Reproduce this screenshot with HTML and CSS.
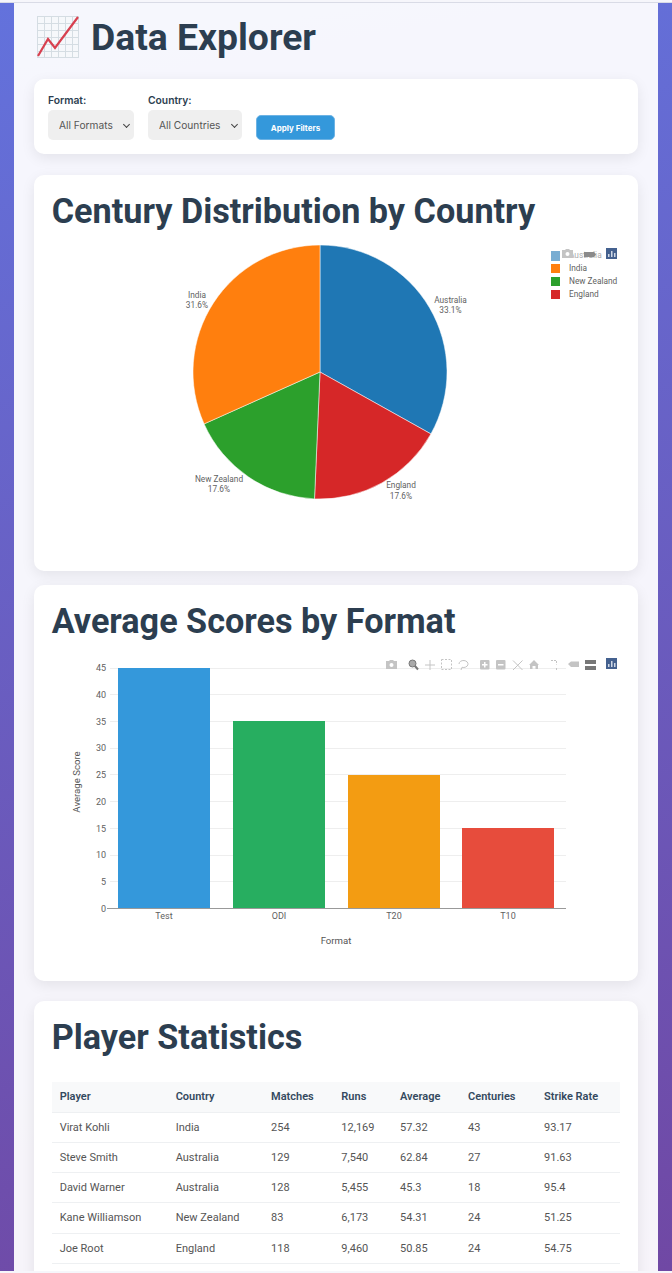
FILE: index.html
```html
<!DOCTYPE html>
<html>
<head>
    <title>Data Explorer</title>
    <link rel="stylesheet" href="styles.css">
</head>
<body>
<div class="container">
    <h1 class="page-title">
        <svg class="title-icon" viewBox="0 0 42 42">
            <rect x="0.5" y="0.5" width="41" height="41" fill="#f6f8fb" stroke="#d5dde3"/>
            <path d="M7.500 1V41M14.500 1V41M21.500 1V41M28.500 1V41M35.500 1V41M1 7.500H41M1 14.500H41M1 21.500H41M1 28.500H41M1 35.500H41" stroke="#d5dde3" stroke-width="1" fill="none"/>
            <path d="M1 40L11 23L18 32L41 1" stroke="#d8404f" stroke-width="2.200" fill="none"/>
        </svg>
        Data Explorer
    </h1>

    <form class="card filters">
        <div class="filter-group">
            <label for="format">Format:</label>
            <div class="select-wrap format-select">
                <select id="format"><option>All Formats</option></select>
            </div>
        </div>
        <div class="filter-group">
            <label for="country">Country:</label>
            <div class="select-wrap country-select">
                <select id="country"><option>All Countries</option></select>
            </div>
        </div>
        <button type="button" class="apply-btn">Apply Filters</button>
    </form>

    <section class="card pie-card">
        <h2>Century Distribution by Country</h2>
        <svg class="chart" width="569" height="320" viewBox="52 240 569 320">
            <!-- pie slices, clockwise from the top -->
            <path d="M320 372V245A127 127 0 0 1 430.9 433.9Z" fill="#1f77b4" stroke="#fff" stroke-width="0.5"/>
            <path d="M320 372L430.9 433.9A127 127 0 0 1 314.5 498.9Z" fill="#d62728" stroke="#fff" stroke-width="0.5"/>
            <path d="M320 372L314.5 498.9A127 127 0 0 1 204.1 423.9Z" fill="#2ca02c" stroke="#fff" stroke-width="0.5"/>
            <path d="M320 372L204.1 423.9A127 127 0 0 1 320 245Z" fill="#ff7f0e" stroke="#fff" stroke-width="0.5"/>

            <g class="pie-label">
                <text x="450.500" y="303">Australia</text><text x="450.500" y="313">33.1%</text>
                <text x="197" y="298">India</text><text x="197" y="308">31.6%</text>
                <text x="219" y="482">New Zealand</text><text x="219" y="492">17.6%</text>
                <text x="401" y="488">England</text><text x="401" y="499">17.6%</text>
            </g>

            <rect x="551" y="251" width="9" height="10" fill="#1f77b4" opacity="0.6"/>
            <rect x="551" y="264" width="9" height="9" fill="#ff7f0e"/>
            <rect x="551" y="277" width="9" height="9" fill="#2ca02c"/>
            <rect x="551" y="290" width="9" height="9" fill="#d62728"/>
            <g class="legend-label">
                <text x="569" y="258" opacity="0.55">Australia</text>
                <text x="569" y="271">India</text>
                <text x="569" y="284">New Zealand</text>
                <text x="569" y="297">England</text>
            </g>

            <!-- modebar -->
            <g fill="#c4c4c4">
                <path d="M562 250h3l1-1h3l1 1h3v8h-11z"/>
                <circle cx="567.500" cy="254" r="2" fill="#fff"/>
                <path d="M584 252h10l2 2.500-2 2.500h-10z" fill="#8a8a8a"/>
            </g>
            <rect x="606" y="248" width="11" height="11" fill="#44618f"/>
            <path d="M608 257v-3h1.500v3zM611 257v-6h1.500v6zM614 257v-4h1.500v4z" fill="#cfd8e6"/>
        </svg>
    </section>

    <section class="card bar-card">
        <h2>Average Scores by Format</h2>
        <svg class="chart" width="569" height="310" viewBox="52 650 569 310">
            <g stroke="#eee" stroke-width="1">
                <path d="M110 668.500H566M110 694.500H566M110 721.500H566M110 748.500H566M110 774.500H566M110 801.500H566M110 828.500H566M110 855.500H566M110 881.500H566"/>
            </g>
            <g class="tick">
                <text x="106" y="671">45</text><text x="106" y="698">40</text><text x="106" y="725">35</text>
                <text x="106" y="751">30</text><text x="106" y="778">25</text><text x="106" y="805">20</text>
                <text x="106" y="832">15</text><text x="106" y="858">10</text><text x="106" y="885">5</text>
                <text x="106" y="912">0</text>
            </g>
            <rect x="118" y="668" width="92" height="241" fill="#3498db"/>
            <rect x="233" y="721" width="92" height="188" fill="#27ae60"/>
            <rect x="348" y="775" width="92" height="134" fill="#f39c12"/>
            <rect x="462" y="828" width="92" height="81" fill="#e74c3c"/>
            <path d="M107 908.500H566" stroke="#999" stroke-width="1"/>
            <g class="x-tick">
                <text x="164" y="919">Test</text><text x="279" y="919">ODI</text>
                <text x="394" y="919">T20</text><text x="508" y="919">T10</text>
            </g>
            <text class="axis-title" x="336" y="944">Format</text>
            <text class="axis-title" transform="translate(80 782) rotate(-90)">Average Score</text>

            <!-- modebar -->
            <g fill="#c4c4c4">
                <path d="M386 661h3l1-1h3l1 1h3v8h-11z"/>
                <circle cx="391.500" cy="665" r="2" fill="#fff"/>
                <rect x="480" y="660" width="9.500" height="9.500" rx="1"/>
                <rect x="496" y="660" width="9.500" height="9.500" rx="1"/>
                <path d="M529 665l5-5 5 5h-1v4h-2.500v-3h-3v3h-2.500v-4z"/>
                <path d="M568 664l3-2.500h8v5.500h-8z"/>
            </g>
            <path d="M482 664.750h5.500M484.750 662v5.500M498 664.750h5.500" stroke="#fff" stroke-width="1.500" fill="none"/>
            <g fill="none" stroke="#c4c4c4">
                <path d="M430 660v10M425 665h10"/>
                <rect x="441.500" y="659.500" width="10" height="10" stroke-dasharray="2 1.500"/>
                <path d="M459 664a4.500 3.500 0 1 1 3 3.300l-1 2.700"/>
                <path d="M513 660.500l9.500 9.500M522.500 660.500l-9.500 9.500"/>
                <path d="M551 660.500h5.500v4M556.500 668v2" stroke-dasharray="2 1"/>
            </g>
            <circle cx="412.500" cy="663.500" r="3.500" fill="#aaa" stroke="#777"/>
            <path d="M415 666l3 3.500" stroke="#777" stroke-width="2"/>
            <path d="M585 660h11v4h-11zM585 666h11v4h-11z" fill="#777"/>
            <rect x="606" y="658" width="11" height="11" fill="#44618f"/>
            <path d="M608 667v-3h1.500v3zM611 667v-6h1.500v6zM614 667v-4h1.500v4z" fill="#cfd8e6"/>
        </svg>
    </section>

    <section class="card table-card">
        <h2>Player Statistics</h2>
        <table class="stats">
            <colgroup>
                <col class="col-player"><col class="col-country"><col class="col-matches">
                <col class="col-runs"><col class="col-average"><col class="col-centuries"><col>
            </colgroup>
            <thead>
                <tr><th>Player</th><th>Country</th><th>Matches</th><th>Runs</th><th>Average</th><th>Centuries</th><th>Strike Rate</th></tr>
            </thead>
            <tbody>
                <tr><td>Virat Kohli</td><td>India</td><td>254</td><td>12,169</td><td>57.32</td><td>43</td><td>93.17</td></tr>
                <tr><td>Steve Smith</td><td>Australia</td><td>129</td><td>7,540</td><td>62.84</td><td>27</td><td>91.63</td></tr>
                <tr><td>David Warner</td><td>Australia</td><td>128</td><td>5,455</td><td>45.3</td><td>18</td><td>95.4</td></tr>
                <tr><td>Kane Williamson</td><td>New Zealand</td><td>83</td><td>6,173</td><td>54.31</td><td>24</td><td>51.25</td></tr>
                <tr><td>Joe Root</td><td>England</td><td>118</td><td>9,460</td><td>50.85</td><td>24</td><td>54.75</td></tr>
            </tbody>
        </table>
    </section>
</div>
</body>
</html>
```

FILE: styles.css
```css
* {
    box-sizing: border-box;
}
html {
    height: 100%;
    overflow: hidden;
    background-color: #f6f6fb;
}
body {
    height: calc(100% - 4px);
    margin: 2px 0;
    overflow: hidden;
    font-family: Roboto, "Liberation Sans", sans-serif;
    background: linear-gradient(170deg, #6372dc 0%, #7048a4 100%);
    border-top: 1px solid #d9dbe6;
}
.container {
    height: 100%;
    margin: 0 13.7px;
    padding: 0 20.6px;
    background-color: rgba(255, 255, 255, 0.94);
    overflow: hidden;
}
.page-title {
    display: flex;
    align-items: center;
    gap: 12px;
    height: 76px;
    margin: 0;
    padding: 0 2.7px 8px;
    font-size: 37.3px;
    font-weight: 700;
    color: #2c3e50;
}
.title-icon {
    width: 42px;
    height: 42px;
}
.card {
    background-color: #fff;
    border-radius: 10px;
    box-shadow: 0 4px 14px rgba(0, 0, 0, 0.08);
}
.filters {
    display: flex;
    align-items: flex-end;
    gap: 14px;
    height: 75px;
    padding: 0 13.7px 14px;
}
.filter-group {
    display: flex;
    flex-direction: column;
    gap: 4px;
}
.filter-group label {
    font-family: Inter, sans-serif;
    font-size: 10.3px;
    font-weight: 600;
    color: #2c3e50;
}
.select-wrap {
    position: relative;
    height: 30px;
}
.select-wrap::after {
    content: "";
    position: absolute;
    top: 12px;
    right: 5px;
    width: 4px;
    height: 4px;
    border-right: 1px solid #444;
    border-bottom: 1px solid #444;
    transform: rotate(45deg);
    pointer-events: none;
}
.select-wrap select {
    width: 100%;
    height: 100%;
    padding: 0 11px;
    font-family: Inter, sans-serif;
    font-size: 10.2px;
    color: #555;
    background-color: #efefef;
    border: none;
    border-radius: 5px;
    appearance: none;
}
.format-select {
    width: 86px;
}
.country-select {
    width: 94px;
}
.apply-btn {
    width: 79px;
    height: 25px;
    padding: 0;
    font-family: Inter, sans-serif;
    font-size: 8px;
    font-weight: 700;
    color: #fff;
    background-color: #3498db;
    border: 1px solid #6db3e4;
    border-radius: 5px;
}
section.card {
    padding: 16px 17.4px 0;
}
.card h2 {
    margin: 0;
    font-size: 34.2px;
    font-weight: 700;
    color: #2c3e50;
}
.pie-card {
    height: 396px;
    margin-top: 21px;
}
.bar-card {
    height: 396px;
    margin-top: 14px;
}
.table-card {
    height: 400px;
    margin-top: 20px;
}
.chart {
    display: block;
    margin-top: 9px;
}
.pie-label text, .legend-label text {
    font-family: Roboto, sans-serif;
    font-size: 8.3px;
    fill: #5f5f5f;
}
.tick text, .x-tick text {
    font-family: Roboto, sans-serif;
    font-size: 9px;
    fill: #5f5f5f;
}
.axis-title {
    font-family: Roboto, sans-serif;
    font-size: 9.6px;
    fill: #555;
}
.pie-label text, .x-tick text, .axis-title {
    text-anchor: middle;
}
.tick text {
    text-anchor: end;
}
.stats {
    width: 100%;
    margin-top: 25px;
    border-collapse: collapse;
    table-layout: fixed;
    font-size: 11px;
}
.col-player { width: 116px; }
.col-country { width: 95.4px; }
.col-matches { width: 70.3px; }
.col-runs { width: 58.7px; }
.col-average { width: 68px; }
.col-centuries { width: 76px; }
.stats th, .stats td {
    padding: 0 8px;
    text-align: left;
    border-bottom: 1px solid #eef0f2;
}
.stats th {
    height: 30px;
    font-weight: 600;
    color: #34495e;
    background-color: #f8f9fa;
}
.stats td {
    height: 30.25px;
    color: #555;
}
```
